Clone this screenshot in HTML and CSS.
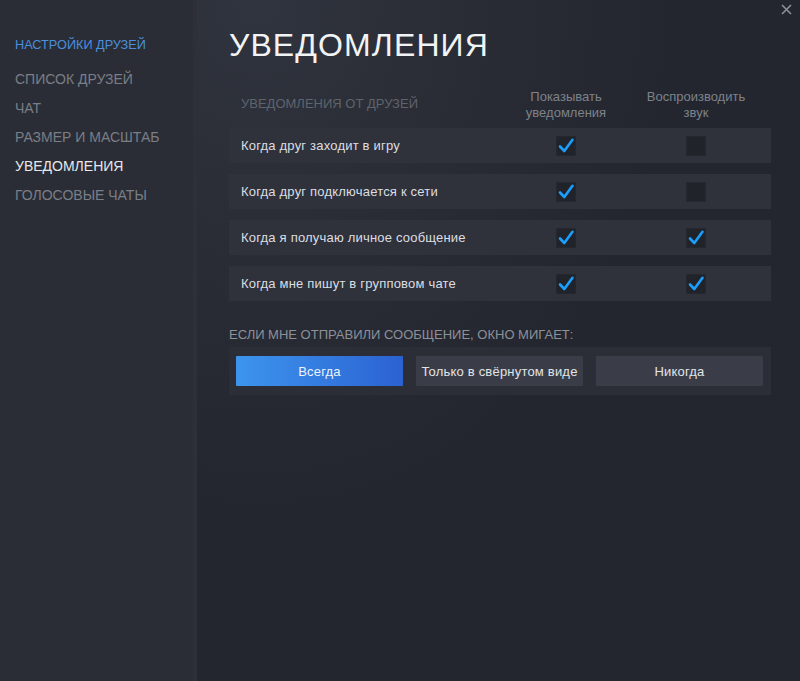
FILE: index.html
```html
<!DOCTYPE html>
<html lang="ru">
<head>
<meta charset="utf-8">
<title>Уведомления</title>
<link rel="stylesheet" href="styles.css">
</head>
<body>
<div class="window">
  <nav class="sidebar">
    <div class="side-heading">НАСТРОЙКИ ДРУЗЕЙ</div>
    <div class="side-item">СПИСОК ДРУЗЕЙ</div>
    <div class="side-item">ЧАТ</div>
    <div class="side-item">РАЗМЕР И МАСШТАБ</div>
    <div class="side-item active">УВЕДОМЛЕНИЯ</div>
    <div class="side-item">ГОЛОСОВЫЕ ЧАТЫ</div>
  </nav>
  <main class="content">
    <button class="close" aria-label="Закрыть">
      <svg width="11" height="11" viewBox="0 0 11 11"><path d="M1 1 L10 10 M10 1 L1 10" stroke="#8b9099" stroke-width="1.6" fill="none"/></svg>
    </button>
    <h1 class="title">УВЕДОМЛЕНИЯ</h1>
    <div class="grid-head">
      <div class="head-label">УВЕДОМЛЕНИЯ ОТ ДРУЗЕЙ</div>
      <div class="head-col">Показывать<br>уведомления</div>
      <div class="head-col">Воспроизводить<br>звук</div>
    </div>
    <div class="rows">
      <div class="row">
        <div class="row-label">Когда друг заходит в игру</div>
        <div class="cell"><span class="check on"><svg viewBox="0 0 20 20"><path d="M4 10.5 L8.3 15 L16.5 3.8"/></svg></span></div>
        <div class="cell"><span class="check"></span></div>
      </div>
      <div class="row">
        <div class="row-label">Когда друг подключается к сети</div>
        <div class="cell"><span class="check on"><svg viewBox="0 0 20 20"><path d="M4 10.5 L8.3 15 L16.5 3.8"/></svg></span></div>
        <div class="cell"><span class="check"></span></div>
      </div>
      <div class="row">
        <div class="row-label">Когда я получаю личное сообщение</div>
        <div class="cell"><span class="check on"><svg viewBox="0 0 20 20"><path d="M4 10.5 L8.3 15 L16.5 3.8"/></svg></span></div>
        <div class="cell"><span class="check on"><svg viewBox="0 0 20 20"><path d="M4 10.5 L8.3 15 L16.5 3.8"/></svg></span></div>
      </div>
      <div class="row">
        <div class="row-label">Когда мне пишут в групповом чате</div>
        <div class="cell"><span class="check on"><svg viewBox="0 0 20 20"><path d="M4 10.5 L8.3 15 L16.5 3.8"/></svg></span></div>
        <div class="cell"><span class="check on"><svg viewBox="0 0 20 20"><path d="M4 10.5 L8.3 15 L16.5 3.8"/></svg></span></div>
      </div>
    </div>
    <div class="section-label">ЕСЛИ МНЕ ОТПРАВИЛИ СООБЩЕНИЕ, ОКНО МИГАЕТ:</div>
    <div class="segmented">
      <button class="seg selected">Всегда</button>
      <button class="seg">Только в свёрнутом виде</button>
      <button class="seg">Никогда</button>
    </div>
  </main>
</div>
</body>
</html>
```
FILE: styles.css
```css
html, body {
  margin: 0;
  padding: 0;
  height: 100%;
}
body {
  font-family: "Liberation Sans", Arial, sans-serif;
  background: #23262e;
}
.window {
  display: flex;
  height: 681px;
  width: 800px;
}
.sidebar {
  flex: none;
  width: 197px;
  box-sizing: border-box;
  background: #2a2d36;
  border-right: 4px solid #2d3039;
  padding: 35px 0 0 15px;
}
.side-heading {
  font-size: 12.7px;
  line-height: 20px;
  color: #4a8fdf;
  margin-bottom: 10px;
}
.side-item {
  font-size: 14px;
  line-height: 29px;
  color: #7a7e86;
}
.side-item.active {
  color: #e6e8ea;
}
.content {
  position: relative;
  flex: 1;
  padding: 26px 29px 0 32px;
  background: radial-gradient(ellipse 420px 520px at 60px 0px, #30343e 0%, #2a2d36 45%, #23262e 100%);
}
.close {
  position: absolute;
  top: 4px;
  right: 8px;
  background: none;
  border: 0;
  padding: 0;
  width: 11px;
  height: 11px;
  display: flex;
}
.title {
  margin: 0;
  font-weight: normal;
  font-size: 32px;
  line-height: 38px;
  letter-spacing: 1.1px;
  color: #f2f3f5;
}
.grid-head {
  display: grid;
  grid-template-columns: 1fr 130px 130px;
  padding: 0 10px 0 12px;
  margin-top: 25px;
  align-items: center;
}
.head-label {
  font-size: 13px;
  color: #5f636c;
  line-height: 16px;
  margin-top: -2px;
}
.head-col {
  font-size: 13px;
  line-height: 16px;
  color: #7e828a;
  text-align: center;
}
.rows {
  display: flex;
  flex-direction: column;
  gap: 11px;
  margin-top: 7px;
}
.row {
  display: grid;
  grid-template-columns: 1fr 130px 130px;
  height: 35px;
  align-items: center;
  padding: 0 10px 0 12px;
  background: #2f323b;
}
.row-label {
  font-size: 13px;
  letter-spacing: 0.2px;
  color: #dcdee2;
}
.cell {
  display: flex;
  justify-content: center;
}
.check {
  width: 20px;
  height: 20px;
  background: #202329;
  display: block;
  box-shadow: inset 0 0 0 1px #24272e;
}
.check svg {
  width: 20px;
  height: 20px;
  display: block;
}
.check svg path {
  fill: none;
  stroke: #1a9fff;
  stroke-width: 2.6;
  stroke-linecap: round;
  stroke-linejoin: round;
}
.section-label {
  margin-top: 26px;
  font-size: 13px;
  line-height: 16px;
  color: #8c9098;
}
.segmented {
  margin-top: 4px;
  display: grid;
  grid-template-columns: 1fr 1fr 1fr;
  gap: 13px;
  padding: 9px 8px 9px 7px;
  background: #2b2e36;
}
.seg {
  height: 30px;
  border: 0;
  font-family: "Liberation Sans", Arial, sans-serif;
  font-size: 13px;
  letter-spacing: 0.2px;
  color: #e2e4e7;
  background: #3a3d47;
  padding: 0;
  border-radius: 1px;
}
.seg.selected {
  background: linear-gradient(90deg, #3d95ee 0%, #2b62d2 100%);
  color: #eef3fb;
}
```
